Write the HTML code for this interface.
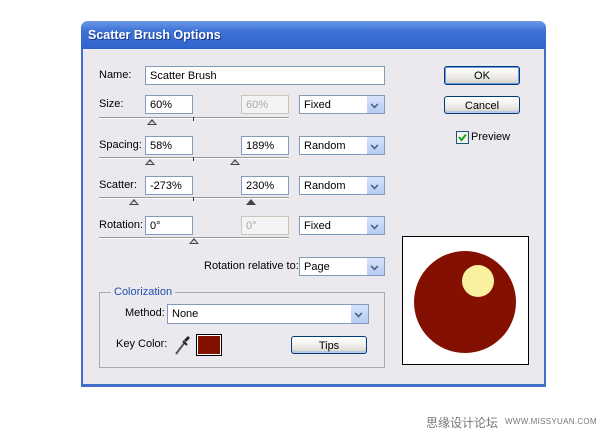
<!DOCTYPE html>
<html><head><meta charset="utf-8"><style>
body{margin:0;width:600px;height:437px;background:#fff;position:relative;overflow:hidden;font-family:"Liberation Sans",Tahoma,sans-serif;font-size:11px;color:#000}
.a{position:absolute}
.dlg{left:81px;top:21px;width:465px;height:366px;background:#3f6fc8;border-radius:7px 7px 0 0;}
.title{left:81px;top:21px;width:465px;height:28px;border-radius:7px 7px 0 0;background:linear-gradient(#6a9ae6,#3f73d6 35%,#2f63cc);}
.title span{position:absolute;left:7px;top:7px;color:#fff;font-weight:bold;font-size:12.5px;text-shadow:1px 1px #1a3a90}
.body{left:83px;top:49px;width:461px;height:335px;background:#ece9ee;}
.in{background:#fff;border:1px solid #7f9db9;box-sizing:border-box;height:19px;padding:3px 4px 0;font-size:11px}
.dis{color:#aaa;background:#f3f2f4;border-color:#c9c7ba}
.sel{background:#fff;border:1px solid #7f9db9;box-sizing:border-box;height:19px;padding:3px 4px 0}
.sel i{position:absolute;right:0;top:0;width:17px;height:17px;background:linear-gradient(#d7e3fb,#b6cbf2);border-left:1px solid #fff}
.sel i:after{content:"";position:absolute;left:4px;top:5px;width:5px;height:5px;border-right:2px solid #4d6185;border-bottom:2px solid #4d6185;transform:rotate(45deg) scale(.8)}
.line{height:1px;background:#999;border-bottom:1px solid #fff}
.tick{width:1px;height:4px;background:#333}
.tri{width:0;height:0;border-left:5px solid transparent;border-right:5px solid transparent;border-bottom:6px solid #444}
.tri.l:after{content:"";position:absolute;left:-3px;top:2px;border-left:3px solid transparent;border-right:3px solid transparent;border-bottom:3px solid #ddd}
.btn{border:1px solid #003c74;border-radius:3px;background:linear-gradient(#fff,#ecebe6 60%,#d6d0c5);box-sizing:border-box;text-align:center;padding-top:3px;box-shadow:inset 0 -2px 0 #b9c8e8}
</style></head><body>
<div class="a dlg"></div>
<div class="a title"><span>Scatter Brush Options</span></div>
<div class="a body"></div>

<div class="a" style="left:99px;top:69px">Name:</div>
<div class="a in" style="left:145px;top:66px;width:240px">Scatter Brush</div>

<div class="a" style="left:99px;top:98px">Size:</div>
<div class="a in" style="left:145px;top:95px;width:48px">60%</div>
<div class="a in dis" style="left:241px;top:95px;width:48px">60%</div>
<div class="a sel" style="left:299px;top:95px;width:86px">Fixed<i></i></div>
<div class="a line" style="left:99px;top:117px;width:190px"></div>
<div class="a tick" style="left:193px;top:117px"></div>
<div class="a tri l" style="left:147px;top:119px"></div>

<div class="a" style="left:99px;top:139px">Spacing:</div>
<div class="a in" style="left:145px;top:136px;width:48px">58%</div>
<div class="a in" style="left:241px;top:136px;width:48px">189%</div>
<div class="a sel" style="left:299px;top:136px;width:86px">Random<i></i></div>
<div class="a line" style="left:99px;top:157px;width:190px"></div>
<div class="a tick" style="left:193px;top:157px"></div>
<div class="a tri l" style="left:145px;top:159px"></div>
<div class="a tri l" style="left:230px;top:159px"></div>

<div class="a" style="left:99px;top:179px">Scatter:</div>
<div class="a in" style="left:145px;top:176px;width:48px">-273%</div>
<div class="a in" style="left:241px;top:176px;width:48px">230%</div>
<div class="a sel" style="left:299px;top:176px;width:86px">Random<i></i></div>
<div class="a line" style="left:99px;top:197px;width:190px"></div>
<div class="a tick" style="left:193px;top:197px"></div>
<div class="a tri l" style="left:129px;top:199px"></div>
<div class="a tri" style="left:246px;top:199px"></div>

<div class="a" style="left:99px;top:219px">Rotation:</div>
<div class="a in" style="left:145px;top:216px;width:48px">0°</div>
<div class="a in dis" style="left:241px;top:216px;width:48px">0°</div>
<div class="a sel" style="left:299px;top:216px;width:86px">Fixed<i></i></div>
<div class="a line" style="left:99px;top:237px;width:190px"></div>
<div class="a tri l" style="left:189px;top:238px"></div>

<div class="a" style="left:204px;top:260px">Rotation relative to:</div>
<div class="a sel" style="left:299px;top:257px;width:86px">Page<i></i></div>

<div class="a" style="left:99px;top:292px;width:284px;height:74px;border:1px solid #aaa"></div>
<div class="a" style="left:111px;top:286px;background:#ece9ee;padding:0 3px;color:#1f4fb0">Colorization</div>
<div class="a" style="left:125px;top:307px">Method:</div>
<div class="a sel" style="left:167px;top:304px;width:202px;height:20px">None<i style="height:18px"></i></div>
<div class="a" style="left:116px;top:338px">Key Color:</div>
<svg class="a" style="left:174px;top:334px" width="18" height="22"><path d="M2 20 L11 8" stroke="#555" stroke-width="2"/><path d="M10 6 L14 2 L16 4 L12 8 Z" fill="#222"/><path d="M9 7 L13 11" stroke="#222" stroke-width="2"/></svg>
<div class="a" style="left:196px;top:334px;width:24px;height:20px;border:1px solid #000;background:#841000;box-shadow:inset 0 0 0 1px #fff"></div>
<div class="a btn" style="left:291px;top:336px;width:76px;height:18px">Tips</div>

<div class="a" style="left:402px;top:236px;width:125px;height:127px;border:1px solid #000;background:#fff"></div>
<svg class="a" style="left:402px;top:236px" width="127" height="128"><circle cx="63" cy="66" r="51" fill="#831000"/><circle cx="76" cy="45" r="16" fill="#f9f0a0"/></svg>

<div class="a btn" style="left:444px;top:66px;width:76px;height:19px;box-shadow:inset 0 0 0 1px #6f98e8">OK</div>
<div class="a btn" style="left:444px;top:96px;width:76px;height:18px">Cancel</div>
<div class="a" style="left:456px;top:131px;width:11px;height:11px;border:1px solid #1c5180;background:#f3f3ee"></div>
<svg class="a" style="left:457px;top:132px" width="11" height="11"><path d="M2 5 L4.5 8 L9 2.5" stroke="#21a121" stroke-width="2" fill="none"/></svg>
<div class="a" style="left:471px;top:131px">Preview</div>

<div class="a" style="left:426px;top:414px;color:#777;font-size:12px;font-family:'Liberation Sans','Noto Sans CJK SC',sans-serif">思缘设计论坛</div>
<div class="a" style="left:505px;top:417px;color:#777;font-size:8px;letter-spacing:.3px">WWW.MISSYUAN.COM</div>
</body></html>
